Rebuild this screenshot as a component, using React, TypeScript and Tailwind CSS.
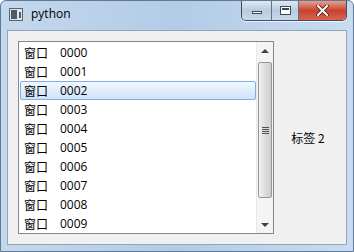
const items = ["0000", "0001", "0002", "0003", "0004", "0005", "0006", "0007", "0008", "0009"];

function TitleButtons() {
  return (
    <div className="flex h-[20px] overflow-hidden rounded-b-[5px] border border-t-0 border-[#3b4f66] shadow-[0_1px_0_rgba(255,255,255,0.7)]">
      <div className="flex w-[30px] items-center justify-center border-r border-[#5d738c] bg-gradient-to-b from-[#dfe8f2] via-[#b9cbe0] to-[#c9d9ea]">
        <div className="mt-[4px] h-[3px] w-[10px] border border-[#3a4a5c] bg-white" />
      </div>
      <div className="flex w-[27px] items-center justify-center border-r border-[#5d738c] bg-gradient-to-b from-[#dfe8f2] via-[#b9cbe0] to-[#c9d9ea]">
        <div className="h-[9px] w-[11px] border border-[#3a4a5c] bg-white p-[1px]">
          <div className="h-full w-full border-t-2 border-[#3a4a5c]" />
        </div>
      </div>
      <div className="flex w-[47px] items-center justify-center bg-gradient-to-b from-[#e3a08f] via-[#c7422f] to-[#d8654f]">
        <svg width="13" height="11" viewBox="0 0 13 11">
          <path d="M2 1 L11 10 M11 1 L2 10" stroke="#4a1a12" strokeWidth="3.6" strokeLinecap="square" />
          <path d="M2 1 L11 10 M11 1 L2 10" stroke="#ffffff" strokeWidth="2" strokeLinecap="square" />
        </svg>
      </div>
    </div>
  );
}

export default function App() {
  return (
    <div
      className="flex h-[252px] w-[354px] flex-col overflow-hidden rounded-t-[6px] border border-[#5f7a97] bg-gradient-to-r from-[#c4d8ed] via-[#b3cbe6] to-[#c9dcef] px-[6px] pb-[6px]"
      style={{ fontFamily: '"Open Sans", "Noto Sans CJK SC", sans-serif' }}
    >
      <div className="flex h-[29px] shrink-0 items-start">
        <div className="mt-[7px] ml-[2px] flex h-[13px] w-[14px] items-center border border-[#5a6470] bg-[#dfe4ea]">
          <div className="ml-[1px] h-[9px] w-[6px] bg-[#4d5a66]" />
          <div className="ml-[2px] h-[6px] w-[2px] bg-[#4d5a66]" />
        </div>
        <span className="mt-[5px] ml-[8px] text-[12px] leading-[16px] text-black">python</span>
        <div className="ml-auto">
          <TitleButtons />
        </div>
      </div>
      <div className="flex flex-1 border border-[#8ea6c0] bg-[#f0f0f0] pt-[10px] pl-[10px] pb-[10px]">
        <div className="flex h-[193px] w-[256px] border border-[#828790] bg-white">
          <div className="flex flex-1 flex-col pt-[1px] pl-[1px]">
            {items.map((n, i) => (
              <div
                key={n}
                className={
                  i === 2
                    ? "flex h-[19px] items-center rounded-[2px] border border-[#84acdd] bg-gradient-to-b from-[#f2f8ff] to-[#cfe3fa] pl-[3px] text-[12px] text-black"
                    : "flex h-[19px] items-center border border-transparent pl-[3px] text-[12px] text-black"
                }
              >
                <span className="w-[36px]" style={{ fontFamily: '"Noto Sans CJK SC", sans-serif' }}>
                  窗口
                </span>
                <span>{n}</span>
              </div>
            ))}
          </div>
          <div className="flex w-[17px] flex-col border-l border-[#e8e8e8] bg-[#f4f4f4]">
            <div className="flex h-[17px] items-center justify-center">
              <div className="h-0 w-0 border-x-[4px] border-b-[4px] border-x-transparent border-b-[#404040]" />
            </div>
            <div className="mx-[1px] mt-[3px] flex h-[136px] items-center justify-center rounded-[2px] border border-[#979797] bg-gradient-to-r from-[#f2f2f2] via-[#dcdcdc] to-[#cfcfcf]">
              <div className="flex flex-col gap-[1px]">
                <div className="h-px w-[7px] bg-[#505050]" />
                <div className="h-px w-[7px] bg-[#505050]" />
                <div className="h-px w-[7px] bg-[#505050]" />
                <div className="h-px w-[7px] bg-[#505050]" />
              </div>
            </div>
            <div className="flex-1" />
            <div className="flex h-[17px] items-center justify-center">
              <div className="h-0 w-0 border-x-[4px] border-t-[4px] border-x-transparent border-t-[#404040]" />
            </div>
          </div>
        </div>
        <div className="flex flex-1 items-center justify-center pr-[4px]">
          <span className="text-[12px] text-black" style={{ fontFamily: '"Noto Sans CJK SC", sans-serif' }}>
            标签&nbsp;2
          </span>
        </div>
      </div>
    </div>
  );
}
